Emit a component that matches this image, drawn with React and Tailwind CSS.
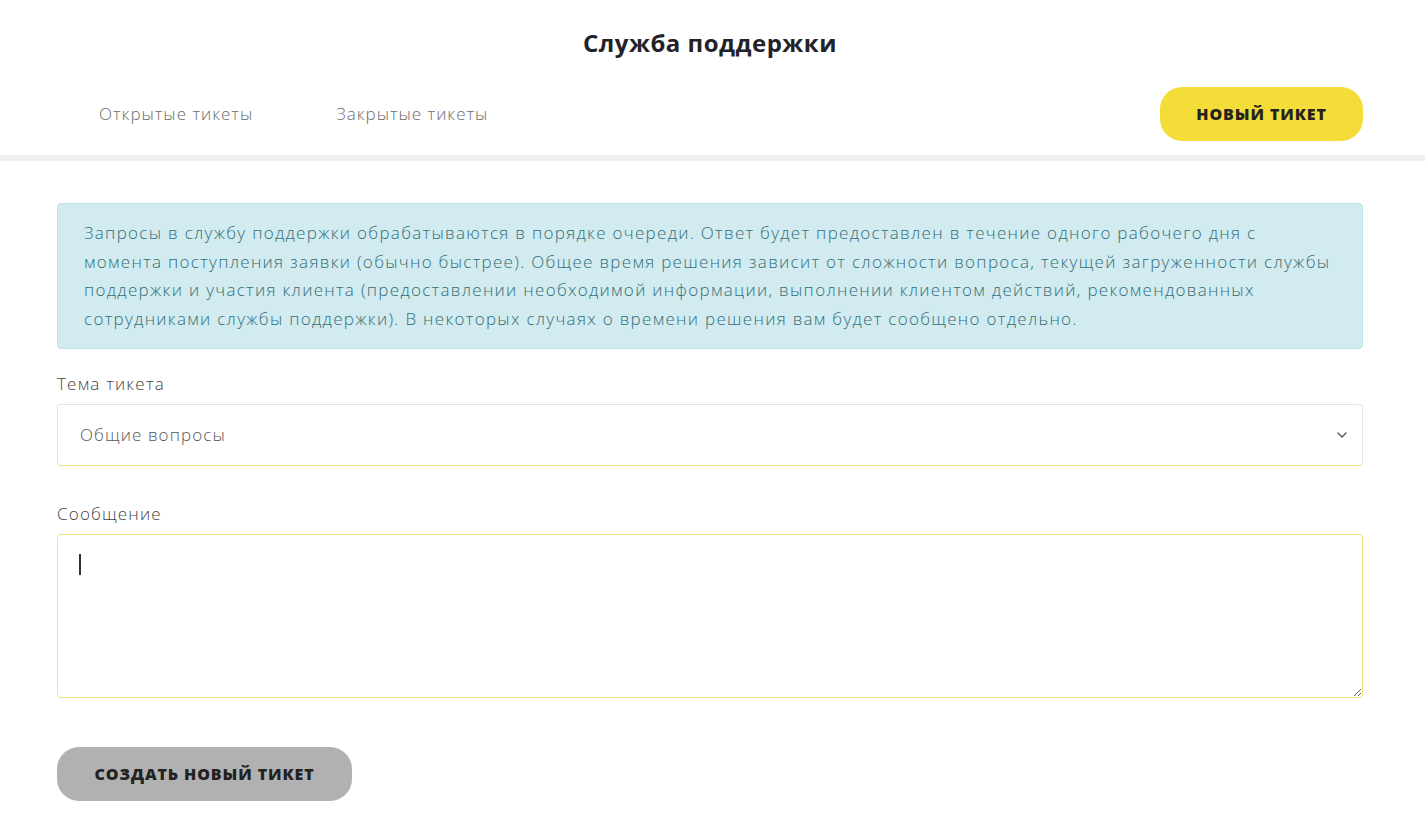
import React from "react";
import { ChevronDown } from "lucide-react";

export default function App() {
  const font = { fontFamily: "'Open Sans', 'Noto Sans', sans-serif" };

  return (
    <div className="min-h-screen bg-white text-[#222]" style={font}>
      {/* Header */}
      <header className="pl-[57px] pr-[62px]">
        <h1 className="pt-[27px] text-center text-[24px] font-bold leading-[32px] tracking-[0.5px] text-[#222227]">
          Служба поддержки
        </h1>
        <div className="mt-[28px] flex items-center justify-between pb-[14px]">
          <nav className="flex items-center gap-[83px] pl-[42px] text-[17px] font-light tracking-[1px] text-[#6b6b6b]">
            <button>Открытые тикеты</button>
            <button>Закрытые тикеты</button>
          </nav>
          <button className="h-[54px] w-[203px] rounded-[22px] bg-[#f5dd39] text-[16px] font-extrabold uppercase tracking-[0.9px] text-[#26221c]">
            Новый тикет
          </button>
        </div>
      </header>
      <div className="h-[6px] bg-[#f0f0f0]" />

      {/* Form */}
      <main className="pl-[57px] pr-[62px] pt-[42px]">
        <div className="rounded-[4px] border border-[#bfe3e9] bg-[#d1ebf0] px-[26px] pt-[15px] pb-[15px] text-[17px] font-light leading-[28.5px] tracking-[1.3px] text-[#346f77] whitespace-nowrap">
          Запросы в службу поддержки обрабатываются в порядке очереди. Ответ будет предоставлен в течение одного рабочего дня с
          <br />
          момента поступления заявки (обычно быстрее). Общее время решения зависит от сложности вопроса, текущей загруженности службы
          <br />
          поддержки и участия клиента (предоставлении необходимой информации, выполнении клиентом действий, рекомендованных
          <br />
          сотрудниками службы поддержки). В некоторых случаях о времени решения вам будет сообщено отдельно.
        </div>

        <label className="mt-[21px] block text-[17px] font-light leading-[28px] tracking-[1.2px] text-[#444]">
          Тема тикета
        </label>
        <div className="relative mt-[6px]">
          <select className="h-[62px] w-full appearance-none rounded-[4px] border border-[#e2e2e2] border-b-[#f3e27a] bg-white pl-[22px] text-[17px] font-light tracking-[1.1px] text-[#555] outline-none">
            <option>Общие вопросы</option>
          </select>
          <ChevronDown
            className="pointer-events-none absolute right-[13px] top-1/2 h-[16px] w-[16px] -translate-y-1/2 text-[#555]"
            strokeWidth={2}
          />
        </div>

        <label className="mt-[34px] block text-[17px] font-light leading-[28px] tracking-[1.2px] text-[#444]">
          Сообщение
        </label>
        <div className="relative mt-[6px]">
          <textarea className="block h-[164px] w-full rounded-[4px] border border-[#f3e27a] bg-white px-[22px] py-[16px] text-[17px] font-light text-[#333] outline-none" />
          {/* caret */}
          <span className="pointer-events-none absolute left-[22px] top-[20px] h-[21px] w-[1.5px] bg-[#333]" />
        </div>

        <button className="mt-[49px] h-[54px] w-[295px] rounded-[22px] bg-[#b1b1b1] text-[16px] font-extrabold uppercase tracking-[0.9px] text-[#222]">
          Создать новый тикет
        </button>
      </main>
    </div>
  );
}
